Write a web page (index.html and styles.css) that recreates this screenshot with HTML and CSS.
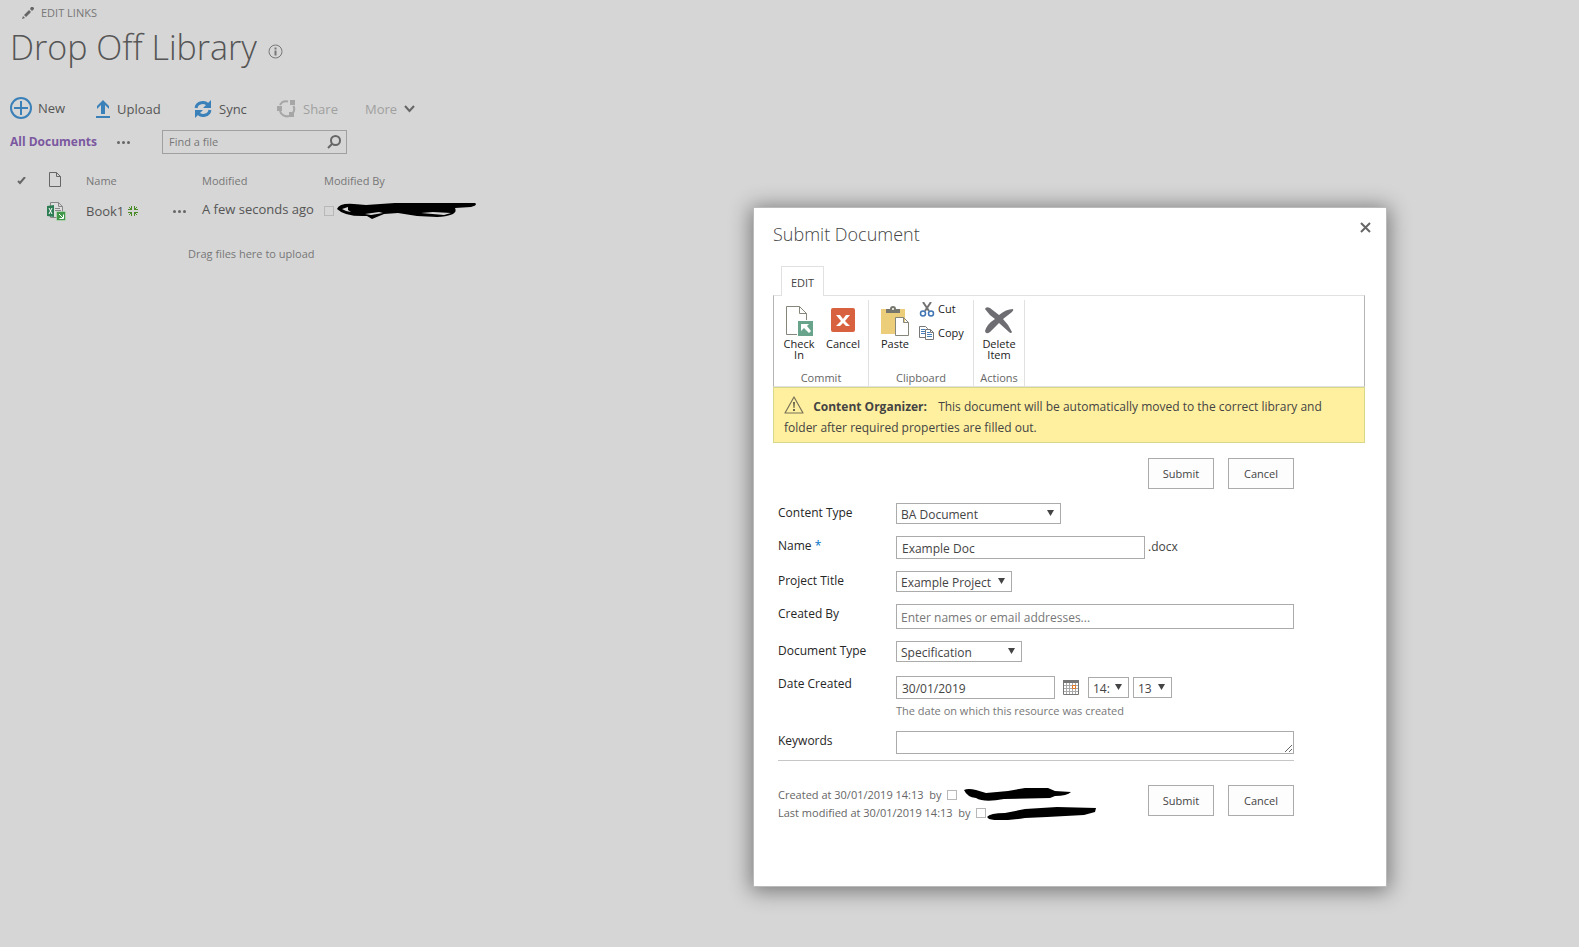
FILE: index.html
```
<!DOCTYPE html>
<html lang="en">
  <head>
    <meta charset="utf-8">
    <title>Drop Off Library</title>
    <link rel="stylesheet" href="styles.css">
  </head>
  <body>
    <div class="page">
      <a class="edit-links" href="#">
        <svg width="12" height="12" viewBox="0 0 12 12"><path fill="#666" d="M0 12l1-3 2 2zM2 8l5-5 2 2-5 5zM8 2l1-2h2l1 1v1l-2 2z"/></svg>
        EDIT LINKS
      </a>
      <header class="title-row">
        <h1>Drop Off Library</h1>
        <svg width="15" height="15" viewBox="0 0 15 15"><circle cx="7.5" cy="7.5" r="6.5" fill="none" stroke="#777"/><path fill="#777" d="M6.500 3.500h2v2h-2zM6.500 6.500h2v5h-2z"/></svg>
      </header>

      <nav class="toolbar">
        <button class="tool tool-new">
          <svg width="22" height="22" viewBox="0 0 22 22"><circle cx="11" cy="11" r="10" fill="none" stroke="#3a80b9" stroke-width="2"/><path stroke="#3a80b9" stroke-width="2" d="M11 4v14M4 11h14"/></svg>
          New
        </button>
        <button class="tool tool-upload">
          <svg width="14" height="18" viewBox="0 0 14 18"><path fill="#3a80b9" d="M7 0l6 6v3L9 5v9H5V5L1 9V6zM0 16h14v2H0z"/></svg>
          Upload
        </button>
        <button class="tool tool-sync">
          <svg width="18" height="18" viewBox="0 0 18 18"><path fill="none" stroke="#3a80b9" stroke-width="3" d="M2 8c1-6 9-7 12-3M16 10c-1 6-9 7-12 3"/><path fill="#3a80b9" d="M17 0v8h-8zM1 18v-8h8z"/></svg>
          Sync
        </button>
        <button class="tool tool-share" disabled>
          <svg width="19" height="18" viewBox="0 0 19 18"><path fill="none" stroke="#a6a6a6" stroke-width="2" d="M3 5A7 7 0 0 1 11 1.500M16.500 6A7 7 0 0 1 15 14M12 16A7 7 0 0 1 3 11"/><path fill="#a6a6a6" d="M13 0h5v5h-5zM12 12h5v5h-5zM0 6h5v5H0z"/></svg>
          Share
        </button>
        <button class="tool tool-more">
          More
          <svg width="11" height="8" viewBox="0 0 11 8"><path fill="none" stroke="#666" stroke-width="2" d="M1 1l4.500 5L10 1"/></svg>
        </button>
      </nav>

      <div class="views">
        <a class="view-link" href="#">All Documents</a>
        <button class="dots" aria-label="More views"><i></i><i></i><i></i></button>
        <form class="search">
          <input type="text" placeholder="Find a file" aria-label="Find a file">
          <button type="button" aria-label="Search">
            <svg width="14" height="14" viewBox="0 0 14 14"><circle cx="8.500" cy="5.500" r="4.500" fill="none" stroke="#666" stroke-width="2"/><path stroke="#666" stroke-width="2" d="M5 9l-4 4"/></svg>
          </button>
        </form>
      </div>

      <table class="list">
        <tr>
          <th class="col-check"><svg width="9" height="8" viewBox="0 0 9 8"><path fill="none" stroke="#666" stroke-width="2" d="M1 4l2 2 5-6"/></svg></th>
          <th class="col-type"><svg width="12" height="15" viewBox="0 0 12 15"><path fill="none" stroke="#666" d="M.5.5h7l4 4v10H.5zM7.500.5v4h4"/></svg></th>
          <th class="col-name">Name</th>
          <th class="col-menu"></th>
          <th class="col-modified">Modified</th>
          <th>Modified By</th>
        </tr>
        <tr class="item">
          <td></td>
          <td class="type">
            <svg width="19" height="19" viewBox="0 0 19 19"><path fill="#ddd" stroke="#888" d="M3.500.5h8l4 4v11h-12zM11.500.5v4h4"/><path stroke="#888" d="M8 6.500h5M8 8.500h6"/><path fill="#2f7d54" d="M0 4l7-1v12l-7-1z"/><path stroke="#fff" d="M2 6l3 6M5 6l-3 6"/><path fill="#40994a" stroke="#cde5ca" stroke-width=".5" d="M9.500 9.500h9v9h-9z"/><path fill="none" stroke="#fff" d="M12 12l4 4M16.500 12.500v4h-4"/></svg>
          </td>
          <td><a class="file" href="#">Book1</a> <svg width="10" height="10" viewBox="0 0 10 10"><path fill="none" stroke="#4c8c28" d="M3.500 0v3.500H0M6.500 0v3.500H10M3.500 10V6.500H0M6.500 10V6.500H10M1 1l3 3M9 1L6 4M1 9l3-3M9 9L6 6"/></svg></td>
          <td><button class="dots" aria-label="Open menu"><i></i><i></i><i></i></button></td>
          <td class="when">A few seconds ago</td>
          <td class="who">
            <i class="presence"></i>
            <svg width="140" height="18" viewBox="0 0 140 18"><path d="M0 7Q2 1 17 2L29 3 58 1H138Q141 3 134 5L118 6Q122 14 100 15L80 14 61 11 47 12 35 17 30 14Q8 15 0 7z"/><path fill="#d6d6d6" d="M5 7l6-2v3l3 2-5-1zM28 12l14-2 4 1-12 2zM84 11l12-1 18 1-7 2z"/></svg>
          </td>
        </tr>
      </table>
      <p class="drag">Drag files here to upload</p>
    </div>

    <section class="dialog" role="dialog" aria-labelledby="dlgTitle">
      <header class="dialog-head">
        <h2 id="dlgTitle">Submit Document</h2>
        <button class="close" aria-label="Close"><svg width="11" height="11" viewBox="0 0 11 11"><path stroke="#666" stroke-width="2" d="M1 1l9 9M10 1l-9 9"/></svg></button>
      </header>

      <div class="tabs"><button class="tab">EDIT</button></div>
      <div class="ribbon">
        <div class="group commit">
          <div class="group-body">
            <button class="big">
              <svg width="28" height="31" viewBox="0 0 28 31"><path fill="#fff" stroke="#85857a" d="M1.500.5h13l7 7v21h-20zM14.500.5v7h7"/><path fill="#68a48b" stroke="#fff" d="M12.500 14.500h16v16h-16z"/><path fill="#fff" d="M16 18h8l-2 2 4 5-2 2-5-5-3 3z"/></svg>
              <span>Check<br>In</span>
            </button>
            <button class="big">
              <svg width="28" height="31" viewBox="0 0 28 31"><rect x="2" y="2" width="24" height="24" rx="2" fill="#d8623f"/><path fill="#fff" d="M7 9h4l3 4 3-4h4l-5 6 5 5h-4l-3-3-3 3H7l5-5z"/></svg>
              <span>Cancel</span>
            </button>
          </div>
          <div class="group-name">Commit</div>
        </div>
        <div class="group clipboard">
          <div class="group-body">
            <button class="big">
              <svg width="28" height="31" viewBox="0 0 28 31"><path fill="#eccd79" d="M0 3h24v25H0z"/><path fill="#77776e" d="M5 3h4q0-3 3-3t3 3h4v4H5z"/><circle cx="12" cy="3" r="1" fill="#fff"/><path fill="#fff" stroke="#85857a" d="M14.500 11.500h8l5 5v13h-13zM22.500 11.500v5h5"/></svg>
              <span>Paste</span>
            </button>
            <div class="smalls">
              <button class="small">
                <svg width="16" height="15" viewBox="0 0 16 15"><path stroke="#737373" stroke-width="2" d="M4 0l6 9M12 0L6 9"/><circle cx="4" cy="11.500" r="2.500" fill="none" stroke="#3f75b3" stroke-width="1.500"/><circle cx="12" cy="11.500" r="2.500" fill="none" stroke="#3f75b3" stroke-width="1.500"/></svg>
                Cut
              </button>
              <button class="small">
                <svg width="16" height="15" viewBox="0 0 16 15"><path fill="#fff" stroke="#777" d="M.5.500h6l2 2v9h-8z"/><path stroke="#4a7eb8" d="M2 3.500h4M2 5.500h4M2 7.500h4"/><path fill="#fff" stroke="#777" d="M6.500 3.500h5l3 3v7h-8zM11.500 3.500v3h3"/><path stroke="#4a7eb8" d="M8 6.500h3M8 8.500h5M8 10.500h5"/></svg>
                Copy
              </button>
            </div>
          </div>
          <div class="group-name">Clipboard</div>
        </div>
        <div class="group actions">
          <div class="group-body">
            <button class="big">
              <svg width="30" height="31" viewBox="0 0 30 31"><path fill="#6d6d72" d="M1 3Q2 0 6 2L15 9Q22 3 29 3 30 4 28 6L19 13Q25 19 28 26 27 28 25 26L15 17 6 26Q2 29 1 25 3 18 11 13 5 9 1 3z"/></svg>
              <span>Delete<br>Item</span>
            </button>
          </div>
          <div class="group-name">Actions</div>
        </div>
      </div>

      <div class="notice">
        <svg width="20" height="18" viewBox="0 0 20 18"><path fill="none" stroke="#77715a" stroke-width="1.200" stroke-linejoin="round" d="M10 1l9 16H1z"/><path fill="#66624f" d="M9 6h2l-.5 6h-1zM9 13h2v2H9z"/></svg>
        <b>Content Organizer:</b> <span>This document will be automatically moved to the correct library and folder after required properties are filled out.</span>
      </div>

      <form class="doc-form">
        <div class="buttons">
          <button type="button">Submit</button>
          <button type="button">Cancel</button>
        </div>

        <div class="fields">
          <div class="field">
            <label for="contentType">Content Type</label>
            <span class="select w-type"><select id="contentType"><option>BA Document</option></select></span>
          </div>
          <div class="field">
            <label for="name">Name <span class="req">*</span></label>
            <input type="text" id="name" class="w-name" value="Example Doc">
            <span class="ext">.docx</span>
          </div>
          <div class="field">
            <label for="project">Project Title</label>
            <span class="select w-project"><select id="project"><option>Example Project</option></select></span>
          </div>
          <div class="field">
            <label for="createdBy">Created By</label>
            <input type="text" id="createdBy" class="people" placeholder="Enter names or email addresses...">
          </div>
          <div class="field">
            <label for="docType">Document Type</label>
            <span class="select w-doctype"><select id="docType"><option>Specification</option></select></span>
          </div>
          <div class="field">
            <label for="dateCreated">Date Created</label>
            <div class="date">
              <div class="date-row">
                <input type="text" id="dateCreated" class="w-date" value="30/01/2019">
                <button type="button" class="calendar" aria-label="Pick a date">
                  <svg width="16" height="15" viewBox="0 0 16 15"><path fill="#fff" stroke="#777" d="M.5.5h15v14H.5z"/><path stroke="#aaa" d="M1 5.500h14M1 8.500h14M1 11.500h14M3.500 3v11M6.500 3v11M9.500 3v11M12.500 3v11"/><path fill="#777" d="M0 0h16v3H0z"/><path fill="#fff" stroke="#e2751d" d="M9.500 5.500h3v3h-3z"/></svg>
                </button>
                <span class="select w-hour"><select aria-label="Hour"><option>14:</option></select></span>
                <span class="select w-minute"><select aria-label="Minute"><option>13</option></select></span>
              </div>
              <div class="help">The date on which this resource was created</div>
            </div>
          </div>
          <div class="field">
            <label for="keywords">Keywords</label>
            <textarea id="keywords" rows="1"></textarea>
          </div>
        </div>

        <footer class="form-foot">
          <div class="stamps">
            <div>Created at 30/01/2019 14:13 &nbsp;by <i class="presence"></i>
              <svg width="108" height="14" viewBox="0 0 108 14"><path d="M0 2Q4 0 12 2L22 5 44 3 61 0 84 0 91 3 107 4Q103 8 91 8L86 10 40 11Q20 15 12 10 3 9 0 2z"/></svg>
            </div>
            <div>Last modified at 30/01/2019 14:13 &nbsp;by <i class="presence"></i>
              <svg width="110" height="14" viewBox="0 0 110 14"><path d="M0 11Q3 7 18 7L38 3 70 1 109 2 108 6 97 9 60 11 38 12Q12 16 2 13z"/></svg>
            </div>
          </div>
          <div class="buttons">
            <button type="button">Submit</button>
            <button type="button">Cancel</button>
          </div>
        </footer>
      </form>
    </section>
  </body>
</html>
```
FILE: styles.css
```
* { box-sizing: border-box; }
body {
  margin: 0;
  min-height: 100vh;
  background: #d6d6d6;
  color: #555;
  font: 13px/18px "Open Sans", "Noto Sans", sans-serif;
}
svg { display: block; flex: none; }
a { color: inherit; text-decoration: none; }
button, input, select, textarea {
  margin: 0;
  padding: 0;
  border: 0;
  border-radius: 0;
  background: none;
  color: inherit;
  font: inherit;
}

/* library page */
.page { padding: 4px 10px; }
.edit-links {
  display: flex;
  align-items: center;
  gap: 7px;
  padding-left: 12px;
  color: #777;
  font-size: 11px;
}
.title-row {
  display: flex;
  align-items: center;
  gap: 11px;
  height: 50px;
}
h1 {
  margin: 0;
  font-size: 34px;
  font-weight: 300;
  line-height: 50px;
}
.title-row svg { margin-top: 9px; }
.toolbar {
  display: flex;
  align-items: center;
  height: 26px;
  margin-top: 23px;
}
.tool {
  display: flex;
  align-items: center;
  gap: 7px;
}
.tool-new { width: 86px; gap: 6px; }
.tool-upload { width: 98px; }
.tool-sync { width: 83px; }
.tool-share { width: 88px; }
.tool-upload, .tool-sync, .tool-share, .tool-more { padding-top: 2px; }
.tool-share, .tool-more { color: #a0a0a0; }
.views {
  display: flex;
  align-items: center;
  margin-top: 9px;
}
.view-link {
  width: 107px;
  color: #7b58a0;
  font-size: 12px;
  font-weight: 700;
}
.dots {
  display: flex;
  gap: 2px;
}
.dots i {
  width: 3px;
  height: 3px;
  border-radius: 50%;
  background: #666;
}
.search {
  display: flex;
  align-items: center;
  width: 185px;
  height: 24px;
  margin-left: 32px;
  padding: 0 5px 0 6px;
  border: 1px solid #a0a0a0;
}
.search input {
  flex: 1;
  min-width: 0;
  font-size: 11px;
}
::placeholder { color: #777; opacity: 1; }
.list {
  margin-top: 14px;
  border-collapse: collapse;
}
.list th {
  height: 26px;
  padding: 0;
  color: #777;
  font-size: 11px;
  font-weight: 400;
  text-align: left;
}
.list td { height: 34px; padding: 0; }
.list td > svg { display: inline-block; }
.list .col-check { width: 39px; padding-left: 7px; }
.col-type { width: 37px; }
.col-type svg { margin-top: -4px; }
.col-name { width: 87px; }
.col-menu { width: 29px; }
.col-modified { width: 122px; }
.type svg { margin: 4px 0 0 -2px; }
.list .when { padding-bottom: 4px; }
.who {
  display: flex;
  align-items: center;
  gap: 3px;
}
.presence {
  display: inline-block;
  flex: none;
  width: 10px;
  height: 10px;
  border: 1px solid #b8b8b8;
}
.drag {
  margin: 17px 0 0 178px;
  color: #777;
  font-size: 11px;
}

/* dialog */
.dialog {
  position: absolute;
  top: 207px;
  right: 192px;
  width: 634px;
  padding: 14px 21px 64px 19px;
  border: 1px solid #bbb;
  background: #fff;
  box-shadow: 0 2px 20px 2px rgba(0, 0, 0, .45);
  color: #444;
  font-size: 12px;
}
.dialog-head {
  display: flex;
  justify-content: space-between;
  align-items: flex-start;
}
h2 {
  margin: 0;
  font-size: 18px;
  font-weight: 300;
  line-height: 24px;
}
.close { margin-right: -6px; }
.tabs {
  position: relative;
  z-index: 1;
  margin: 20px 0 -1px 8px;
}
.tab {
  display: block;
  width: 43px;
  height: 30px;
  padding-top: 2px;
  border: 1px solid #e1e1e1;
  border-bottom: 0;
  background: #fff;
  font-size: 11px;
}
.ribbon {
  display: flex;
  height: 92px;
  padding-top: 4px;
  border: 1px solid #e1e1e1;
  border-right-color: #b5b5b5;
  border-left-color: #b5b5b5;
  color: #222;
  font-size: 11px;
}
.group {
  display: flex;
  flex-direction: column;
  justify-content: space-between;
  border-right: 1px solid #e1e1e1;
}
.group-body { display: flex; }
.group-name {
  color: #666;
  line-height: 16px;
  text-align: center;
}
.commit { width: 95px; padding-right: 3px; padding-left: 3px; }
.clipboard { width: 105px; }
.actions { width: 51px; }
.big {
  display: flex;
  flex-direction: column;
  align-items: center;
  width: 44px;
  padding-top: 6px;
  line-height: 11px;
}
.big span { padding-top: 1px; }
.clipboard .big { width: 48px; margin-left: 2px; }
.actions .big { width: 50px; }
.smalls {
  display: flex;
  flex-direction: column;
  gap: 8px;
  padding-top: 1px;
}
.small {
  display: flex;
  align-items: center;
  gap: 3px;
  line-height: 16px;
}
.notice {
  padding: 8px 10px 4px;
  border: 1px solid #d7d889;
  background: #fff09f;
  line-height: 21px;
}
.notice svg {
  display: inline-block;
  margin-right: 6px;
  vertical-align: -3px;
}
.notice span { margin-left: 8px; }
.doc-form { padding: 15px 71px 0 5px; }
.buttons {
  display: flex;
  justify-content: flex-end;
  gap: 14px;
}
.buttons button {
  width: 66px;
  height: 31px;
  border: 1px solid #ababab;
  background: #fdfdfd;
  font-size: 11px;
}
.fields {
  display: flex;
  flex-direction: column;
  gap: 12px;
  margin-top: 14px;
  padding-bottom: 6px;
  border-bottom: 1px solid #c6c6c6;
}
.field { display: flex; }
.field label {
  flex: none;
  width: 118px;
  padding-top: 1px;
  color: #262626;
}
.req { color: #0072c6; }
.field input, .field textarea, .select {
  height: 23px;
  border: 1px solid #ababab;
  background: #fff;
}
.field input { padding: 1px 5px 0; }
.field .people {
  flex: 1;
  min-width: 0;
  height: 25px;
  padding-left: 4px;
}
.field textarea {
  flex: 1;
  min-width: 0;
  padding: 1px 5px;
}
.select {
  position: relative;
  height: 21px;
}
.select::after {
  content: "";
  position: absolute;
  top: 6px;
  right: 6px;
  width: 7px;
  height: 6px;
  background: #444;
  clip-path: polygon(0 0, 100% 0, 50% 100%);
  pointer-events: none;
}
.select select {
  display: block;
  width: 100%;
  height: 19px;
  padding: 2px 0 0 4px;
  appearance: none;
  line-height: 17px;
}
.w-type { width: 165px; }
.w-name { width: 249px; }
.w-project { width: 116px; }
.w-doctype { width: 126px; }
.w-date { width: 159px; }
.w-hour { width: 41px; }
.w-minute { width: 39px; margin-left: 4px; }
.ext { padding: 2px 3px 0; }
.date { padding-top: 2px; }
.date-row { display: flex; align-items: center; }
.calendar { margin: 0 9px 0 8px; }
.help {
  margin-top: 4px;
  color: #777;
  font-size: 11px;
  line-height: 16px;
}
.form-foot {
  display: flex;
  justify-content: space-between;
  align-items: flex-start;
  margin-top: 24px;
}
.stamps {
  padding-top: 1px;
  color: #666;
  font-size: 11px;
}
.stamps div { display: flex; align-items: center; white-space: pre; }
.stamps .presence { margin: 0 7px 0 3px; }
.stamps div + div .presence { margin-right: 1px; }
```
